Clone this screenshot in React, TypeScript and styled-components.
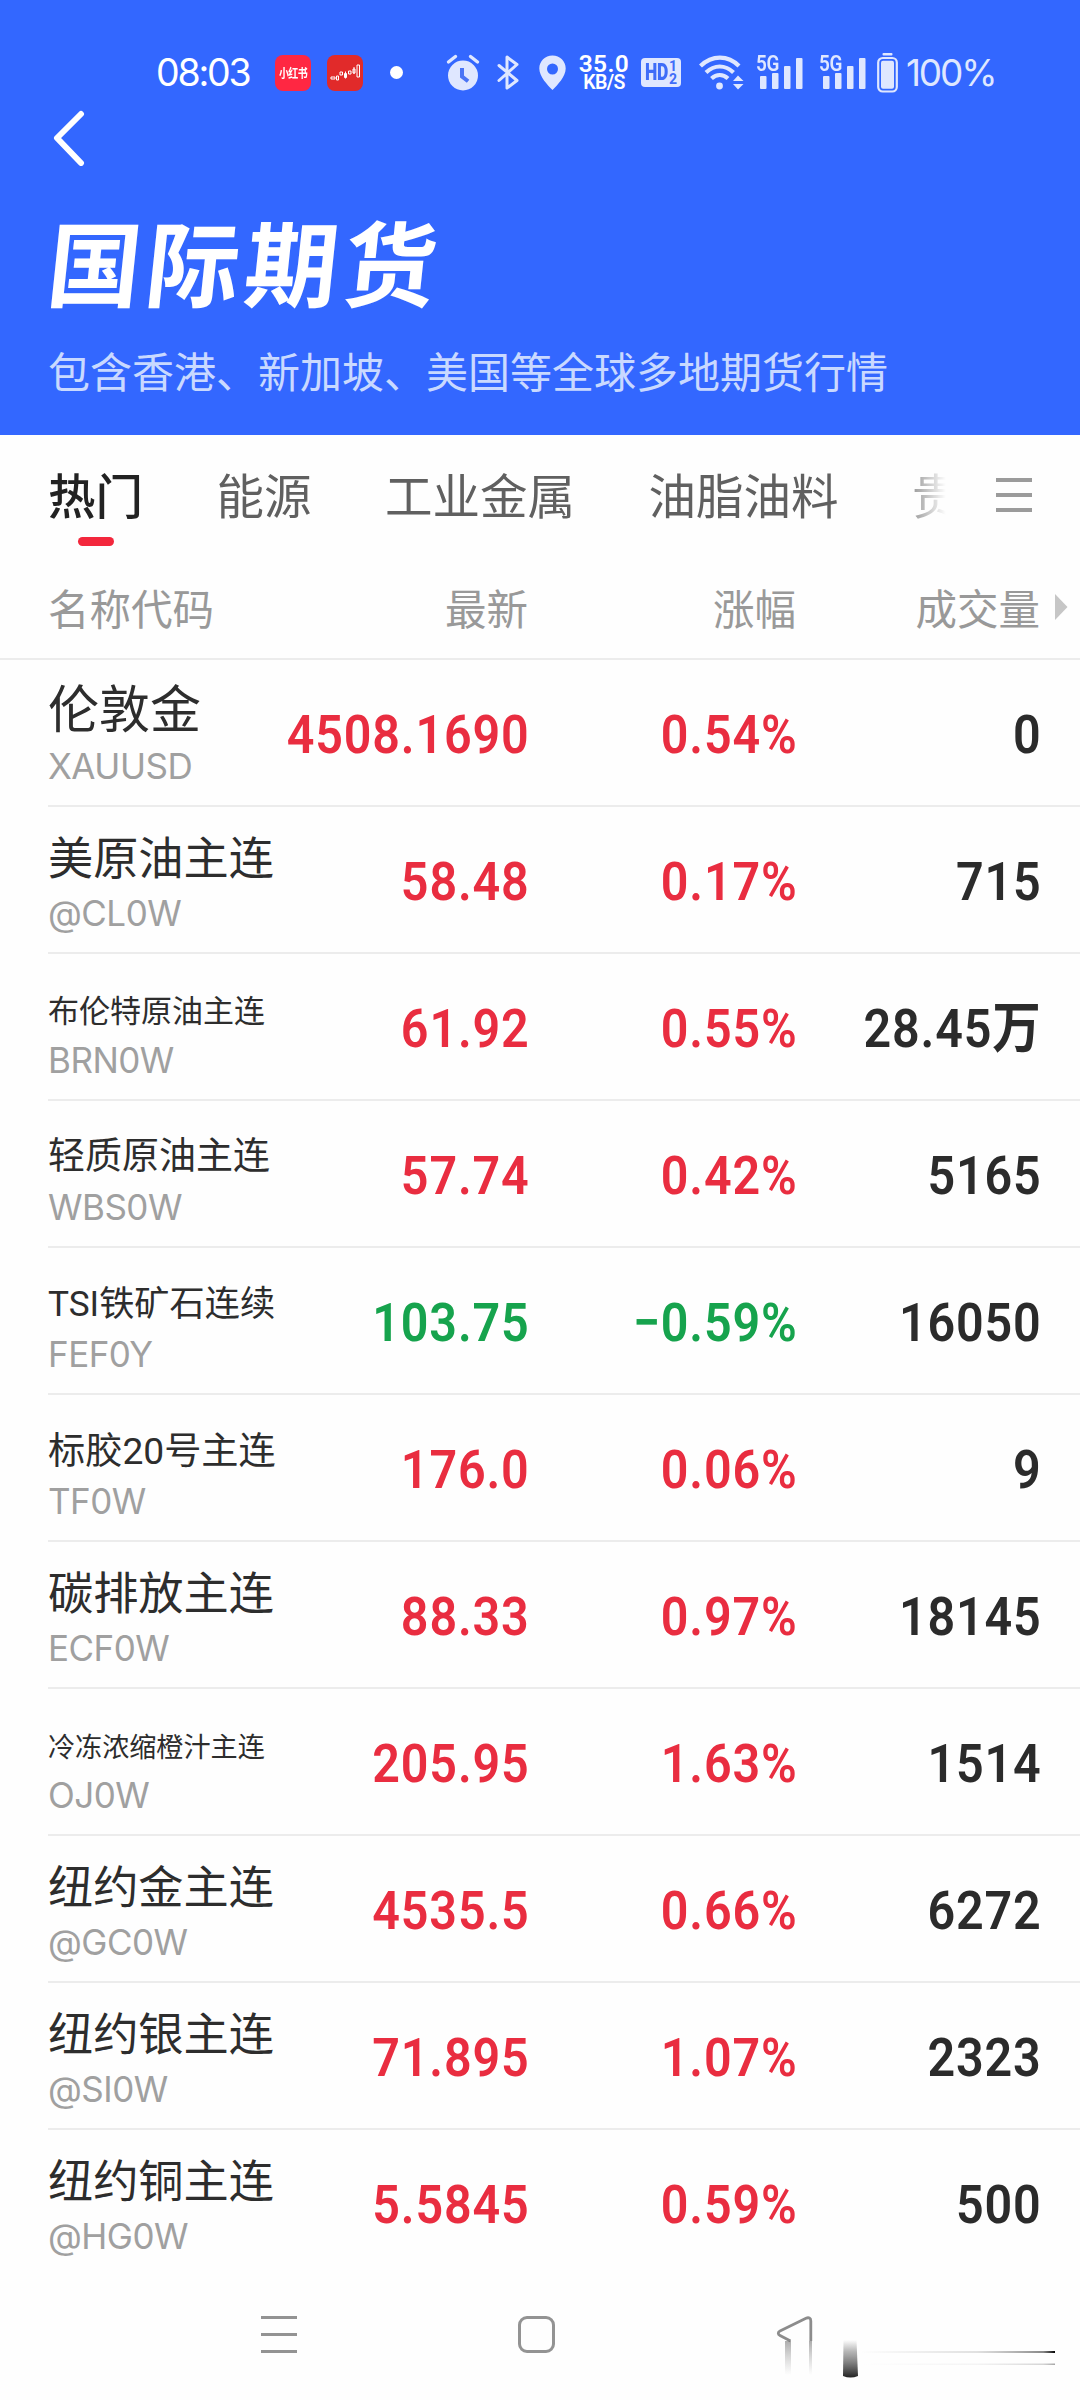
import React from "react";
import styled, { createGlobalStyle } from "styled-components";

const latin = `Inter, Roboto, "Noto Sans CJK SC", sans-serif`;
const digits = `Roboto, "Noto Sans CJK SC", sans-serif`;
const cjk = `"Noto Sans CJK SC", sans-serif`;
const ice = "#dfe7ff";

const GlobalStyle = createGlobalStyle`
  * { box-sizing: border-box; }
  body { margin: 0; background: #fefefe; font-family: ${cjk}; }
`;

const Screen = styled.div`
  width: 1080px;
  height: 2400px;
  display: flex;
  flex-direction: column;
  background: #fefefe;
  overflow: hidden;
`;

const Hero = styled.header`
  height: 435px;
  flex: none;
  background: #3367ff;
  display: flex;
  flex-direction: column;
`;

const StatusBar = styled.div`
  height: 105px;
  padding: 40px 84px 0 156px;
  display: flex;
  align-items: center;
  color: ${ice};
`;

const StatusItem = styled.div<{ $w: number; $gap?: number }>`
  width: ${(p) => p.$w}px;
  margin-left: ${(p) => p.$gap ?? 0}px;
  flex: none;
  display: flex;
  align-items: center;
  white-space: nowrap;
  svg { display: block; overflow: visible; }
`;

const Clock = styled.span`
  font: 420 37.5px/40px ${latin};
  letter-spacing: -2.2px;
  color: #fff;
`;

const AppBadge = styled.div<{ $bg: string }>`
  width: 36px;
  height: 36px;
  border-radius: 8px;
  background: ${(p) => p.$bg};
  color: #fff;
  display: flex;
  align-items: center;
  justify-content: center;
  font: 700 10px/36px ${cjk};
  letter-spacing: -0.6px;
  span { transform: scaleY(1.25); }
`;

const Dot = styled.i`
  width: 13px;
  height: 13px;
  border-radius: 50%;
  background: #fff;
`;

const Speed = styled.div`
  width: 100%;
  display: flex;
  flex-direction: column;
  align-items: center;
  color: #fff;
  font: 600 24.5px/20px ${digits};
  letter-spacing: 0.4px;
  small { font-size: 19.5px; line-height: 17px; letter-spacing: -0.7px; }
`;

const Percent = styled.span`
  font: 430 37px/40px ${latin};
  letter-spacing: -2.2px;
`;

const BackRow = styled.div`
  height: 66px;
  padding: 5px 0 0 53px;
  svg { display: block; }
`;

const Title = styled.h1`
  margin: 34px 0 0 49px;
  height: 110px;
  font: 700 93px/110px ${cjk};
  letter-spacing: 5.5px;
  color: #fff;
  transform: skewX(-6deg);
  white-space: nowrap;
`;

const Subtitle = styled.p`
  margin: 25px 0 0 48px;
  font: 400 42px/60px ${cjk};
  color: #c9d9ff;
  white-space: nowrap;
`;

const TabBar = styled.nav`
  height: 125px;
  flex: none;
  padding: 0 48px;
  display: flex;
  justify-content: space-between;
`;

const TabList = styled.div`
  width: 900px;
  height: 125px;
  display: flex;
  gap: 73.5px;
  overflow: hidden;
  mask-image: linear-gradient(to right, #000 845px, transparent 898px);
`;

const Tab = styled.div<{ $active?: boolean }>`
  flex: none;
  display: flex;
  flex-direction: column;
  align-items: center;
  padding-top: 24px;
  font: ${(p) => (p.$active ? 500 : 400)} 47.5px/70px ${cjk};
  color: ${(p) => (p.$active ? "#222" : "#606060")};
  &::after {
    content: "";
    width: 36px;
    height: 9px;
    margin-top: 8px;
    border-radius: 4.5px;
    background: ${(p) => (p.$active ? "#f3273c" : "transparent")};
  }
`;

const MenuLines = styled.div<{ $gap: number; $color: string; $thick: number; $top?: number }>`
  width: 36px;
  padding-top: ${(p) => p.$top ?? 0}px;
  display: flex;
  flex-direction: column;
  gap: ${(p) => p.$gap}px;
  i { height: ${(p) => p.$thick}px; background: ${(p) => p.$color}; }
`;

const columns = `
  display: grid;
  grid-template-columns: 220px 260px 268px 244px 1fr;
  align-items: center;
  margin-left: 48px;
`;

const HeadRow = styled.div`
  ${columns}
  height: 99px;
  padding-bottom: 5px;
  flex: none;
  font: 400 41.5px/60px ${cjk};
  color: #999;
  span + span { text-align: right; }
  svg { margin-left: 15px; }
`;

const HeadLine = styled.div`
  height: 2px;
  margin-top: -1px;
  flex: none;
  background: #ececec;
`;

const Row = styled.div<{ $last: boolean }>`
  ${columns}
  height: 147px;
  flex: none;
  border-bottom: 2px solid ${(p) => (p.$last ? "transparent" : "#ececec")};
`;

const NameCell = styled.div`
  height: 145px;
  display: flex;
  flex-direction: column;
  justify-content: flex-end;
  padding-bottom: 17px;
  white-space: nowrap;
`;

const Name = styled.div<{ $size: number; $drop: number }>`
  font: 400 ${(p) => p.$size}px/60px Roboto, ${cjk};
  margin-bottom: ${(p) => p.$drop}px;
  color: #2d2d2d;
`;

const Code = styled.div`
  font: 400 35px/44px ${latin};
  letter-spacing: -0.5px;
  color: #a0a0a0;
`;

const Figure = styled.div<{ $color: string }>`
  display: flex;
  justify-content: flex-end;
  padding-top: 3px;
  margin-right: -1.5px;
  font: 600 54.5px/70px ${digits};
  letter-spacing: 0.9px;
  transform: scaleX(0.89);
  transform-origin: right center;
  white-space: nowrap;
  color: ${(p) => p.$color};
`;

const NavBar = styled.footer`
  height: 124px;
  flex: none;
  position: relative;
  padding: 39px 0 0 261px;
  display: flex;
`;

const HomeKey = styled.div`
  width: 37px;
  height: 37px;
  margin-left: 221px;
  border: 3px solid #939393;
  border-radius: 9px;
`;

const BackKey = styled.svg`
  position: absolute;
  left: 740px;
  top: 3px;
  width: 340px;
  height: 120px;
`;

const RED = "#e92d40";
const GREEN = "#16a34d";
const INK = "#2b2b2b";

type Quote = [name: string, size: number, drop: number, code: string, price: string, change: string, volume: string];

const quotes: Quote[] = [
  ["伦敦金", 51, 3, "XAUUSD", "4508.1690", "0.54%", "0"],
  ["美原油主连", 45.2, 1, "@CL0W", "58.48", "0.17%", "715"],
  ["布伦特原油主连", 31, -4, "BRN0W", "61.92", "0.55%", "28.45万"],
  ["轻质原油主连", 37, -2, "WBS0W", "57.74", "0.42%", "5165"],
  ["TSI铁矿石连续", 35.2, -2, "FEF0Y", "103.75", "−0.59%", "16050"],
  ["标胶20号主连", 37.2, -2, "TF0W", "176.0", "0.06%", "9"],
  ["碳排放主连", 45.2, 1, "ECF0W", "88.33", "0.97%", "18145"],
  ["冷冻浓缩橙汁主连", 27.1, -5, "OJ0W", "205.95", "1.63%", "1514"],
  ["纽约金主连", 45.2, 1, "@GC0W", "4535.5", "0.66%", "6272"],
  ["纽约银主连", 45.2, 1, "@SI0W", "71.895", "1.07%", "2323"],
  ["纽约铜主连", 45.2, 1, "@HG0W", "5.5845", "0.59%", "500"],
];

const AlarmIcon = () => (
  <svg width="32" height="36" viewBox="0 0 32 36">
    <circle cx="16" cy="20.5" r="15" fill={ice} />
    <path d="M1.5 7 8.5 1.5M30.5 7 23.5 1.5" stroke={ice} strokeWidth="3.4" strokeLinecap="round" />
    <path d="M15 15v6.5l4.500 3.500" stroke="#4a74f5" strokeWidth="4" fill="none" strokeLinecap="square" />
  </svg>
);

const BluetoothIcon = () => (
  <svg width="22" height="36" viewBox="0 0 22 36" fill="none" stroke={ice} strokeWidth="3" strokeLinejoin="round" strokeLinecap="round">
    <path d="M2 10.500 20 25.500 10 33V2L20 9.500 2 25.500" />
  </svg>
);

const PinIcon = () => (
  <svg width="27" height="36" viewBox="0 0 27 36">
    <path fillRule="evenodd" fill={ice} d="M13.500 0.500C6 .5 .3 6.200 .3 13.500c0 8 8.200 16.500 13.200 21.500 5-5 13.200-13.500 13.200-21.500C26.700 6.200 21 .5 13.500.5Zm0 8a5.500 5.500 0 1 1 0 11 5.500 5.500 0 0 1 0-11Z" />
  </svg>
);

const HdBadge = styled.div`
  width: 40px;
  height: 29px;
  border-radius: 4px;
  background: ${ice};
  color: #3f6df8;
  display: flex;
  align-items: center;
  justify-content: center;
  font: 700 23px/29px ${digits};
`;

const HdText = styled.b`
  width: 24px;
  transform: scaleX(0.76);
  transform-origin: left center;
  letter-spacing: -0.4px;
`;

const HdSlots = styled.span`
  display: flex;
  flex-direction: column;
  font-size: 14px;
  line-height: 12.5px;
`;

const WifiIcon = () => (
  <svg width="45" height="36" viewBox="0 0 45 36" fill="none" stroke={ice} strokeWidth="4.200">
    <path d="M1.500 11C13-.2 29-.2 40 11M7 17.500c8.500-8 19-8 27.500 0M12.500 23.500c5-4.500 11.500-4.500 16.500 0" />
    <circle cx="20.500" cy="31" r="3.400" fill={ice} stroke="none" />
    <path d="M34 26 39 20.500 44.500 26ZM34 29 39 34.500 44.500 29Z" fill={ice} stroke="none" />
  </svg>
);

const SignalWrap = styled.div`
  width: 47px;
  height: 36px;
  display: grid;
  grid-template: 100% / 100%;
  > * { grid-area: 1 / 1; }
  span {
    font: 600 22px/17px ${digits};
    letter-spacing: -0.3px;
    transform: scaleX(0.86);
    transform-origin: left top;
  }
`;

const Signal = () => (
  <SignalWrap>
    <svg width="47" height="36" viewBox="0 0 47 36" fill={ice}>
      <rect x="4" y="21" width="6.500" height="13" rx="1" />
      <rect x="16" y="18" width="6.500" height="16" rx="1" />
      <rect x="28" y="11" width="6.500" height="23" rx="1" />
      <rect x="40" y="3" width="6.500" height="31" rx="1" />
    </svg>
    <span>5G</span>
  </SignalWrap>
);

const BatteryIcon = () => (
  <svg width="21" height="40" viewBox="0 0 21 40">
    <rect x="5.500" y="0" width="10" height="2.500" rx="1" fill={ice} />
    <rect x="1.200" y="5" width="18.600" height="33.500" rx="4.500" fill="none" stroke={ice} strokeWidth="2.200" />
    <rect x="4" y="7.800" width="13" height="28" rx="2" fill={ice} />
  </svg>
);

export default function App() {
  return (
    <Screen>
      <GlobalStyle />
      <Hero>
        <StatusBar>
          <StatusItem $w={95}><Clock>08:03</Clock></StatusItem>
          <StatusItem $w={36} $gap={24}><AppBadge $bg="#ff2742"><span>小红书</span></AppBadge></StatusItem>
          <StatusItem $w={36} $gap={16}>
            <AppBadge $bg="#e12a2a">
              <svg width="30" height="20" viewBox="0 0 30 20" fill="none" stroke="#fff" strokeWidth="1">
                <path d="M1 14h4v2H1zM6.500 13h2v4h-2zM10 9h2.500v3H10zM14.500 10.500h2v4h-2zM15.500 8.500v7M18.500 8h2.500v3h-2.500zM23 6h2v4h-2zM24 4v7M27 2h2.500v12H27z" />
              </svg>
            </AppBadge>
          </StatusItem>
          <StatusItem $w={13} $gap={27}><Dot /></StatusItem>
          <StatusItem $w={32} $gap={44}><AlarmIcon /></StatusItem>
          <StatusItem $w={22} $gap={18}><BluetoothIcon /></StatusItem>
          <StatusItem $w={27} $gap={20}><PinIcon /></StatusItem>
          <StatusItem $w={50} $gap={13}><Speed>35.0<small>KB/S</small></Speed></StatusItem>
          <StatusItem $w={40} $gap={12}>
            <HdBadge>
              <HdText>HD</HdText>
              <HdSlots><span>1</span><span>2</span></HdSlots>
            </HdBadge>
          </StatusItem>
          <StatusItem $w={45} $gap={18}><WifiIcon /></StatusItem>
          <StatusItem $w={47} $gap={12}><Signal /></StatusItem>
          <StatusItem $w={47} $gap={16}><Signal /></StatusItem>
          <StatusItem $w={21} $gap={11}><BatteryIcon /></StatusItem>
          <StatusItem $w={92} $gap={8}><Percent>100%</Percent></StatusItem>
        </StatusBar>
        <BackRow>
          <svg width="32" height="56" viewBox="0 0 32 56" fill="none" stroke="#fff" strokeWidth="6" strokeLinecap="round" strokeLinejoin="round">
            <path d="M28 4 4 28l24 25" />
          </svg>
        </BackRow>
        <Title>国际期货</Title>
        <Subtitle>包含香港、新加坡、美国等全球多地期货行情</Subtitle>
      </Hero>
      <TabBar>
        <TabList>
          <Tab $active>热门</Tab>
          <Tab>能源</Tab>
          <Tab>工业金属</Tab>
          <Tab>油脂油料</Tab>
          <Tab>贵</Tab>
        </TabList>
        <MenuLines $gap={11} $thick={4} $color="#9b9b9b" $top={43}><i /><i /><i /></MenuLines>
      </TabBar>
      <HeadRow>
        <span>名称代码</span>
        <span>最新</span>
        <span>涨幅</span>
        <span>成交量</span>
        <svg width="13" height="26" viewBox="0 0 13 26"><path d="M0 0 12.500 13 0 26Z" fill="#c6c6c6" /></svg>
      </HeadRow>
      <HeadLine />
      {quotes.map(([name, size, drop, code, price, change, volume], i) => {
        const tone = change.startsWith("−") ? GREEN : RED;
        return (
          <Row key={code} $last={i === quotes.length - 1}>
            <NameCell>
              <Name $size={size} $drop={drop}>{name}</Name>
              <Code>{code}</Code>
            </NameCell>
            <Figure $color={tone}>{price}</Figure>
            <Figure $color={tone}>{change}</Figure>
            <Figure $color={INK}>{volume}</Figure>
          </Row>
        );
      })}
      <NavBar>
        <MenuLines $gap={14} $thick={3} $color="#939393"><i /><i /><i /></MenuLines>
        <HomeKey />
        <BackKey viewBox="0 0 340 120">
          <defs>
            <linearGradient id="fade" x1="0" y1="0" x2="0" y2="1">
              <stop offset="0" stopColor="#777" stopOpacity=".6" />
              <stop offset="1" stopColor="#999" stopOpacity="0" />
            </linearGradient>
            <linearGradient id="block" x1="0" y1="0" x2="0" y2="1">
              <stop offset="0" stopColor="#999" stopOpacity="0" />
              <stop offset=".3" stopColor="#999" stopOpacity=".7" />
              <stop offset="1" stopColor="#222" />
            </linearGradient>
            <linearGradient id="streak" x1="0" y1="0" x2="1" y2="0">
              <stop offset="0" stopColor="#888" stopOpacity="0" />
              <stop offset=".6" stopColor="#888" stopOpacity=".25" />
              <stop offset=".94" stopColor="#555" stopOpacity=".7" />
              <stop offset="1" stopColor="#000" />
            </linearGradient>
          </defs>
          <path d="M50.500 61 40 55.500c-2.300-1.200-2.300-3.300 0-4.500L66 38.300c2.700-1.300 4.800-.3 4.800 2.700v20" fill="none" stroke="#8c8c8c" strokeWidth="2.800" />
          <rect x="45" y="61" width="6" height="34" fill="url(#fade)" />
          <rect x="69" y="61" width="3" height="34" fill="url(#fade)" />
          <path d="M103.500 60h13l1.500 36q-7.500 3-15 0Z" fill="url(#block)" />
          <rect x="120" y="71" width="195" height="2" fill="url(#streak)" />
          <rect x="120" y="83.500" width="195" height="1.500" fill="url(#streak)" opacity=".35" />
        </BackKey>
      </NavBar>
    </Screen>
  );
}
